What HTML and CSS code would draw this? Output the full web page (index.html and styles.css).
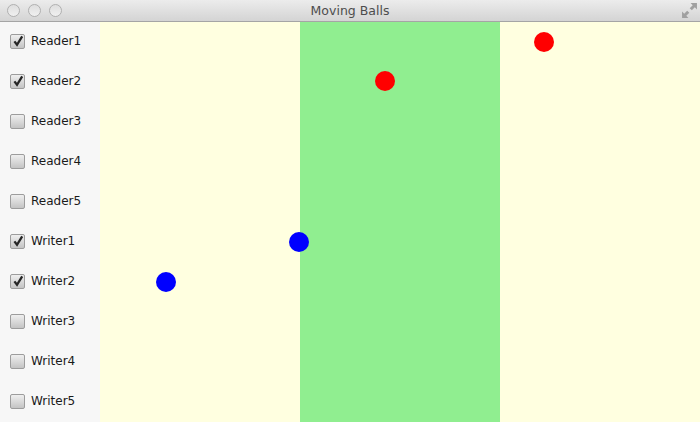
FILE: index.html
```html
<!DOCTYPE html>
<html>
<head>
<meta charset="utf-8">
<link rel="stylesheet" href="styles.css">
</head>
<body>
<div class="window">
  <div class="titlebar">
    <div class="lights"><span class="light"></span><span class="light"></span><span class="light"></span></div>
    <div class="title">Moving Balls</div>
    <svg class="resize" width="17" height="17" viewBox="0 0 16 16">
      <path d="M9 1 H15 V7 L13 5 L10.2 7.8 L8.2 5.8 L11 3 Z" fill="#a0a0a0"/>
      <path d="M7 15 H1 V9 L3 11 L5.8 8.2 L7.8 10.2 L5 13 Z" fill="#a0a0a0"/>
    </svg>
  </div>
  <div class="content">
    <div class="panel">
      <label class="row"><span class="box"><svg viewBox="0 0 14 14" width="14" height="14"><path d="M3.4 7.4 L6 10.8 L11.2 2.4" fill="none" stroke="#262626" stroke-width="2.3"/></svg></span>Reader1</label>
      <label class="row"><span class="box"><svg viewBox="0 0 14 14" width="14" height="14"><path d="M3.4 7.4 L6 10.8 L11.2 2.4" fill="none" stroke="#262626" stroke-width="2.3"/></svg></span>Reader2</label>
      <label class="row"><span class="box"></span>Reader3</label>
      <label class="row"><span class="box"></span>Reader4</label>
      <label class="row"><span class="box"></span>Reader5</label>
      <label class="row"><span class="box"><svg viewBox="0 0 14 14" width="14" height="14"><path d="M3.4 7.4 L6 10.8 L11.2 2.4" fill="none" stroke="#262626" stroke-width="2.3"/></svg></span>Writer1</label>
      <label class="row"><span class="box"><svg viewBox="0 0 14 14" width="14" height="14"><path d="M3.4 7.4 L6 10.8 L11.2 2.4" fill="none" stroke="#262626" stroke-width="2.3"/></svg></span>Writer2</label>
      <label class="row"><span class="box"></span>Writer3</label>
      <label class="row"><span class="box"></span>Writer4</label>
      <label class="row"><span class="box"></span>Writer5</label>
    </div>
    <div class="canvas">
      <div class="zone yellow"></div>
      <div class="zone green"></div>
      <div class="zone yellow"></div>
      <span class="ball red" style="left:434px;top:10px"></span>
      <span class="ball red" style="left:275px;top:49px"></span>
      <span class="ball blue" style="left:189px;top:210px"></span>
      <span class="ball blue" style="left:56px;top:250px"></span>
    </div>
  </div>
</div>
</body>
</html>
```

FILE: styles.css
```css
html, body { margin: 0; padding: 0; }
body { width: 700px; height: 422px; overflow: hidden; font-family: "DejaVu Sans", "Liberation Sans", sans-serif; }
.window { display: flex; flex-direction: column; width: 700px; height: 422px; }
.titlebar {
  position: relative;
  height: 21px;
  border-bottom: 1px solid #a5a5a5;
  background: linear-gradient(#ececec, #d4d4d4);
  display: flex;
  align-items: center;
  justify-content: center;
}
.lights { position: absolute; left: 7px; top: 4px; display: flex; gap: 8px; }
.light {
  width: 11px; height: 11px; border-radius: 50%;
  border: 1px solid #b0b0b0;
  background: linear-gradient(#dedede, #f0f0f0);
}
.title { font-size: 12.5px; color: #4d4d4d; line-height: 21px; }
.resize { position: absolute; right: 2px; top: 2px; }
.content { display: flex; flex: 1; }
.panel { width: 100px; background: #f7f7f7; display: flex; flex-direction: column; }
.row {
  height: 40px; display: flex; align-items: center;
  padding-left: 10px; gap: 6px;
  font-size: 12px; color: #1a1a1a;
  padding-bottom: 2px; box-sizing: border-box;
}
.box {
  width: 13px; height: 13px;
  border: 1px solid #9c9c9c;
  border-radius: 2px;
  background: linear-gradient(#efefef, #c4c4c4);
  position: relative;
  flex: none;
}
.box svg { position: absolute; left: 0; top: -1px; }
.canvas { position: relative; flex: 1; display: flex; }
.zone { width: 200px; }
.yellow { background: #ffffe0; }
.green { background: #90ee90; }
.ball { position: absolute; width: 20px; height: 20px; border-radius: 50%; }
.red { background: #ff0000; }
.blue { background: #0000ff; }
```
